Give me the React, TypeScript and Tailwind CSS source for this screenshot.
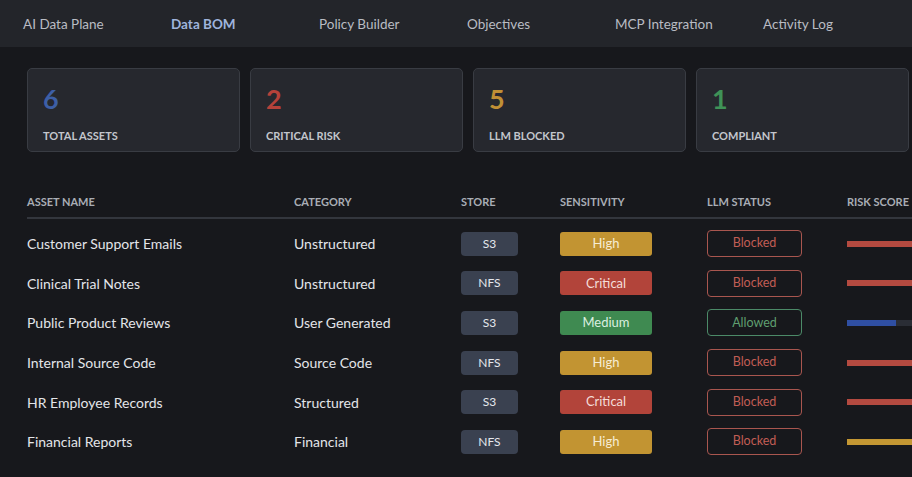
import { ReactNode } from 'react'

const tabs = ['AI Data Plane', 'Data BOM', 'Policy Builder', 'Objectives', 'MCP Integration', 'Activity Log']

const stats = [
  { value: '6', label: 'Total Assets', color: 'text-[#3d5fa6]' },
  { value: '2', label: 'Critical Risk', color: 'text-[#b5423a]' },
  { value: '5', label: 'LLM Blocked', color: 'text-[#c09035]' },
  { value: '1', label: 'Compliant', color: 'text-[#3f9257]' },
]

type Row = {
  name: string
  category: string
  store: string
  sensitivity: 'High' | 'Critical' | 'Medium'
  allowed: boolean
  risk: number
  bar: string
}

const rows: Row[] = [
  { name: 'Customer Support Emails', category: 'Unstructured', store: 'S3', sensitivity: 'High', allowed: false, risk: 100, bar: 'bg-[#b44a40]' },
  { name: 'Clinical Trial Notes', category: 'Unstructured', store: 'NFS', sensitivity: 'Critical', allowed: false, risk: 100, bar: 'bg-[#b44a40]' },
  { name: 'Public Product Reviews', category: 'User Generated', store: 'S3', sensitivity: 'Medium', allowed: true, risk: 49, bar: 'bg-[#2f4fa3]' },
  { name: 'Internal Source Code', category: 'Source Code', store: 'NFS', sensitivity: 'High', allowed: false, risk: 100, bar: 'bg-[#b44a40]' },
  { name: 'HR Employee Records', category: 'Structured', store: 'S3', sensitivity: 'Critical', allowed: false, risk: 100, bar: 'bg-[#b44a40]' },
  { name: 'Financial Reports', category: 'Financial', store: 'NFS', sensitivity: 'High', allowed: false, risk: 100, bar: 'bg-[#c49733]' },
]

const sensitivityStyle = {
  High: 'bg-[#c29432] text-[#f6ecd2]',
  Critical: 'bg-[#b2443a] text-[#f4ddd9]',
  Medium: 'bg-[#3f8a51] text-[#dcefe0]',
}

function Cols({ children, className = '' }: { children: ReactNode; className?: string }) {
  return (
    <div className={`grid grid-cols-[267px_167px_99px_147px_140px_120px] items-center ${className}`}>
      {children}
    </div>
  )
}

export default function App() {
  return (
    <div
      className="w-[912px] h-[477px] overflow-hidden bg-[#17181c] text-[#e3e5e9]"
      style={{ fontFamily: 'Lato, "Open Sans", sans-serif' }}
    >
      <nav className="h-[47px] bg-[#23252a] flex items-center pl-[23px] pt-[2px]">
        {tabs.map((t) => (
          <div
            key={t}
            className={`w-[148px] shrink-0 text-[13.5px] ${
              t === 'Data BOM' ? 'font-bold text-[#9fb4dc]' : 'text-[#b9bcc3]'
            }`}
          >
            {t}
          </div>
        ))}
      </nav>

      <div className="pl-[27px]">
        <div className="flex gap-[10px] pt-[21px]">
          {stats.map((s) => (
            <div
              key={s.label}
              className="w-[213px] h-[84px] shrink-0 rounded-[5px] border border-[#393c43] bg-[#26282e] px-[15px] pt-[14px]"
            >
              <div className={`text-[27px] font-bold leading-[32px] ${s.color}`}>{s.value}</div>
              <div className="mt-[13px] text-[11px] font-bold uppercase text-[#c3c6cc]">{s.label}</div>
            </div>
          ))}
        </div>

        <Cols className="mt-[38px] h-[29px] border-b-2 border-[#33363d] text-[11px] font-bold text-[#a9adb5] pb-[3px]">
          <div>ASSET NAME</div>
          <div>CATEGORY</div>
          <div>STORE</div>
          <div>SENSITIVITY</div>
          <div>LLM STATUS</div>
          <div>RISK SCORE</div>
        </Cols>

        <div className="pt-[5px]">
          {rows.map((r) => (
            <Cols key={r.name} className="h-[39.6px] text-[14px]">
              <div>{r.name}</div>
              <div>{r.category}</div>
              <div>
                <span className="flex h-[24px] w-[57px] items-center justify-center rounded-[4px] bg-[#3a4150] text-[12px] text-[#e4e7ed]">
                  {r.store}
                </span>
              </div>
              <div>
                <span
                  className={`flex h-[24px] w-[92px] items-center justify-center rounded-[3px] text-[13px] ${
                    sensitivityStyle[r.sensitivity]
                  }`}
                >
                  {r.sensitivity}
                </span>
              </div>
              <div>
                <span
                  className={`flex h-[27px] w-[95px] items-center justify-center rounded-[4px] border text-[12.5px] ${
                    r.allowed ? 'border-[#4c8a68] text-[#5f9f70]' : 'border-[#a9564f] text-[#c25d55]'
                  }`}
                >
                  {r.allowed ? 'Allowed' : 'Blocked'}
                </span>
              </div>
              <div className="h-[6px] w-[100px] bg-[#2a2d35]">
                <div className={`h-full ${r.bar}`} style={{ width: `${r.risk}%` }} />
              </div>
            </Cols>
          ))}
        </div>
      </div>
    </div>
  )
}
